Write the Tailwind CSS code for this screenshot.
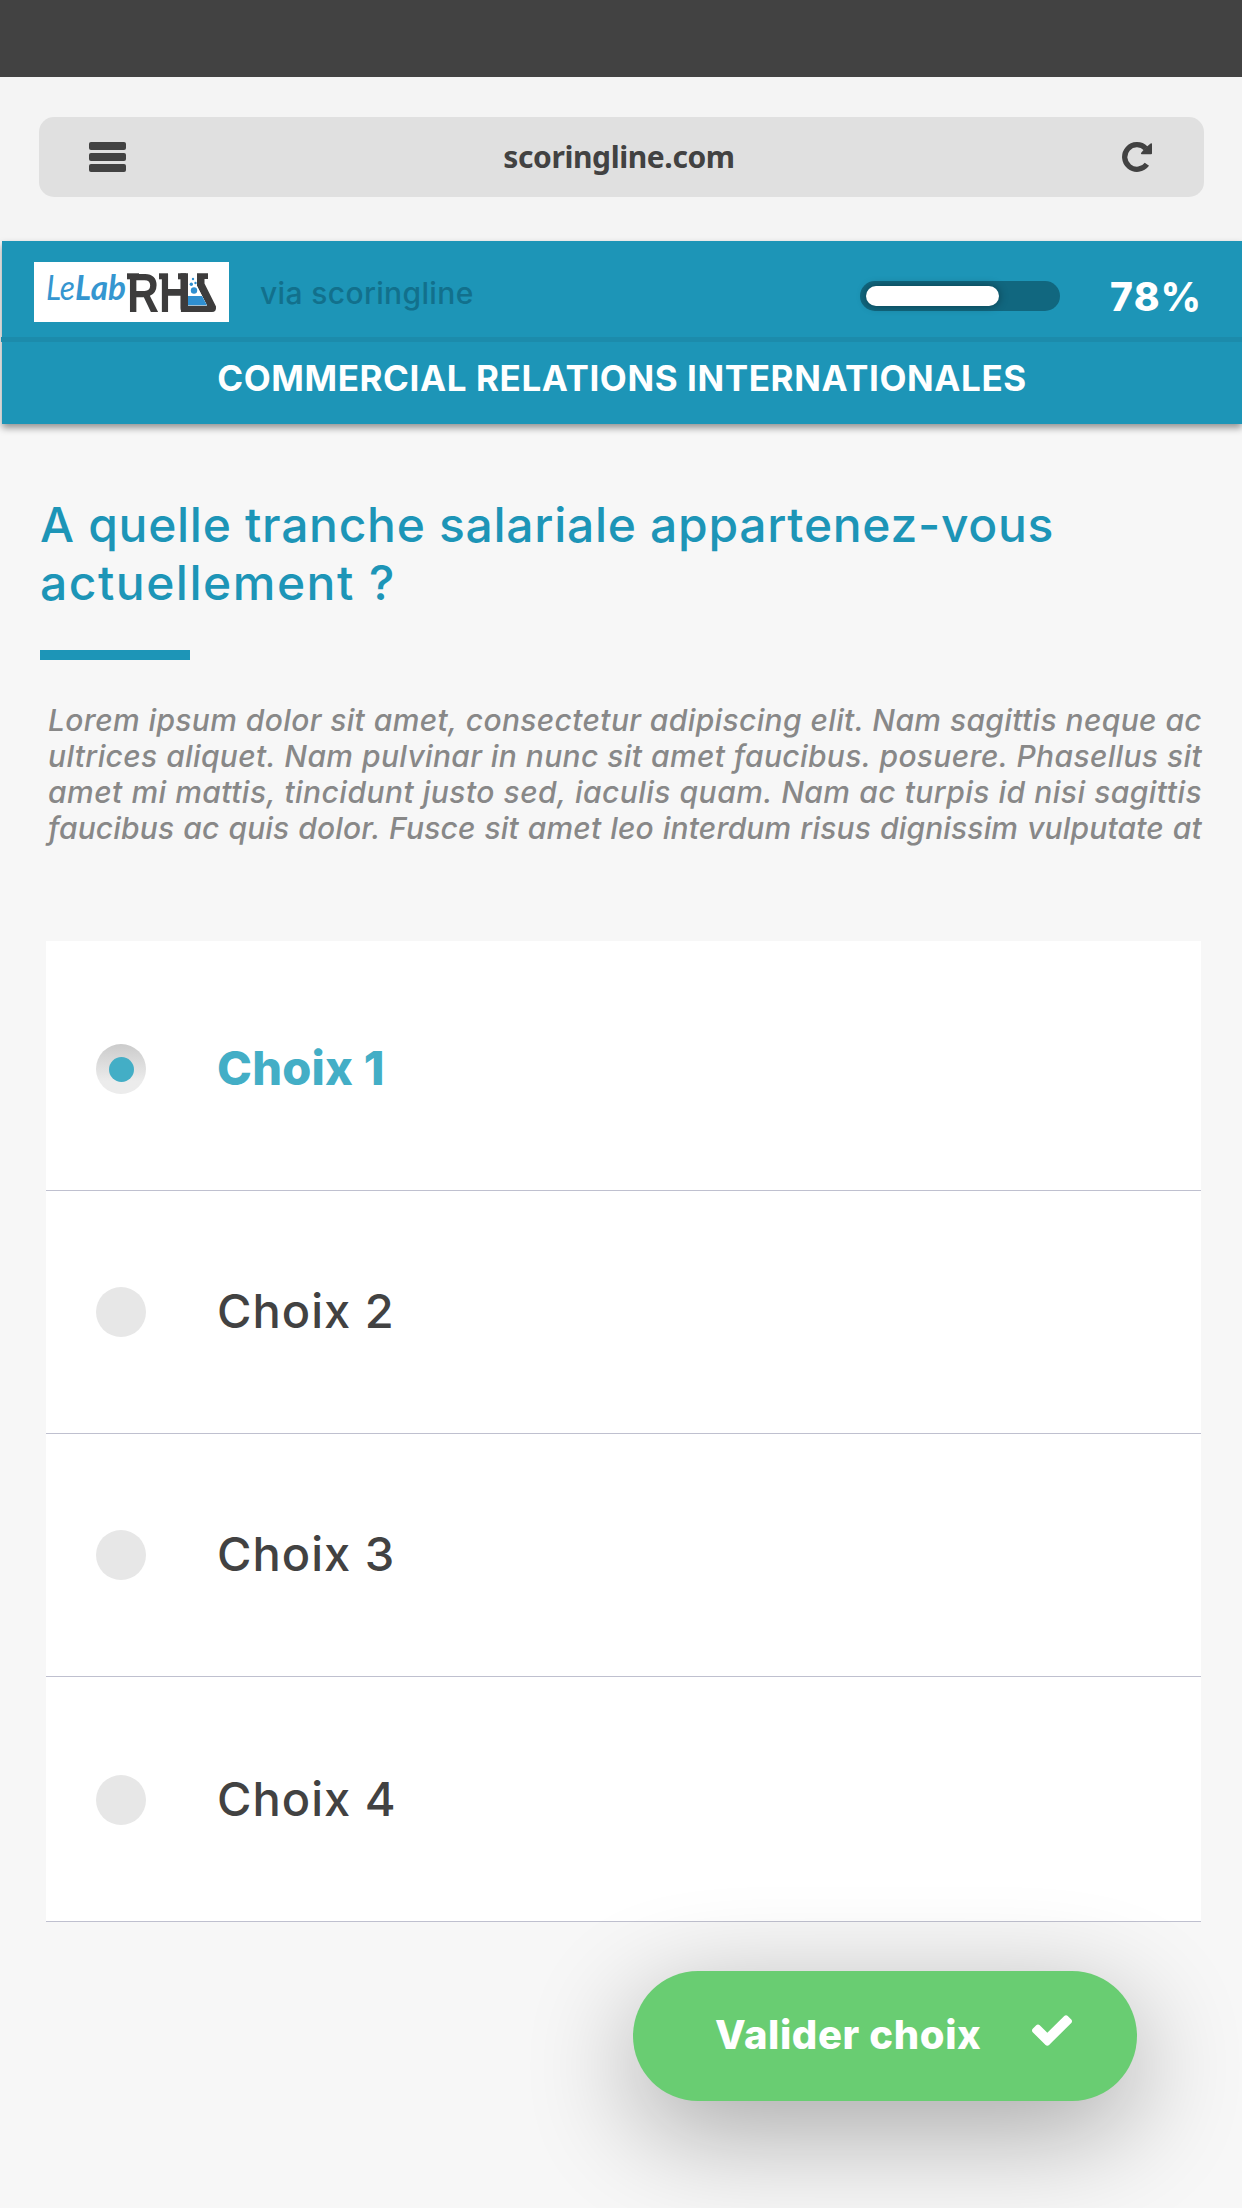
<!DOCTYPE html>
<html lang="fr">
<head>
  <meta charset="UTF-8">
  <meta name="viewport" content="width=device-width, initial-scale=1.0">
  <title>Scoringline - Commercial relations internationales</title>
  <!-- Tailwind CSS CDN -->
  <script src="https://cdn.jsdelivr.net/npm/@tailwindcss/browser@4"></script>
</head>
<body class="bg-[#f7f7f7] h-[2208px] overflow-hidden font-['Inter',sans-serif] text-[#424242]">
  <!-- Status bar -->
  <div class="h-[77px] bg-[#424242]"></div>

  <!-- Browser bar -->
  <div class="h-[164px] bg-[#f4f4f4] pt-10 pl-[39px] pr-[38px]">
    <div class="h-20 rounded-[15px] bg-[#e0e0e0] flex items-center justify-between pl-[50px] pr-[52px]">
      <div class="w-[37px] flex flex-col gap-[3px]">
        <div class="h-2 rounded-[2px] bg-[#424242]"></div>
        <div class="h-2 rounded-[2px] bg-[#424242]"></div>
        <div class="h-2 rounded-[2px] bg-[#424242]"></div>
      </div>
      <p class="pb-px pr-2.5 font-['Noto_Sans',sans-serif] font-bold text-[30px] leading-none tracking-[-0.4px]">scoringline.com</p>
      <svg class="w-[30px] h-[30px]" viewBox="0 0 30 30">
        <path d="M23.7 6.3A12.3 12.3 0 1 0 24.9 22.3" fill="none" stroke="#424242" stroke-width="5.3"/>
        <path d="M25 4.4L28.6 1.5Q30 .6 30 2V11.4Q30 12.2 29 12.2H19.6Q18.4 12 19.2 10.8L22 7.6z" fill="#424242"/>
      </svg>
    </div>
  </div>

  <!-- Header -->
  <header class="ml-0.5 h-[183px] bg-[#1d95b7] shadow-[0_4px_7px_rgba(0,0,0,0.4)]">
    <div class="h-24 flex items-center pt-1.5 pl-8 pr-[41px]">
      <svg class="w-[195px] h-[60px] bg-white overflow-visible" viewBox="0 0 195 60">
        <g fill="#3596d0" font-family="Lato, sans-serif" font-style="italic" font-size="34">
          <text x="12" y="38" textLength="29" lengthAdjust="spacingAndGlyphs">Le</text>
          <text x="41" y="38" font-weight="700" textLength="51" lengthAdjust="spacingAndGlyphs">Lab</text>
        </g>
        <g fill="#3d3c3c" font-family="Liberation Sans, sans-serif" font-weight="700" font-size="56">
          <text x="93" y="50" textLength="32" lengthAdjust="spacingAndGlyphs">R</text>
          <text x="125" y="50" textLength="31" lengthAdjust="spacingAndGlyphs">H</text>
          <rect x="93" y="11.3" width="12" height="6"/>
          <rect x="125" y="11.3" width="9" height="6"/>
          <rect x="144" y="11.3" width="8" height="6"/>
        </g>
        <!-- Flask -->
        <path d="M146.500 11.300H154V43.500H173L163 24V11.300H174V17H170.500V21.500L182 44.500Q182.500 50 178 50H150Q146.500 50 146.500 46z" fill="#3d3c3c"/>
        <path d="M154 11H163V24L173 43.500H154z" fill="#fff"/>
        <path d="M154 34H168L173 43.200H154z" fill="#2f8fd0"/>
        <g fill="#2f8fd0">
          <circle cx="160" cy="28.500" r="3.200"/>
          <circle cx="157.300" cy="22.300" r="1.700"/>
          <circle cx="161.500" cy="21" r="1.200"/>
          <circle cx="159" cy="17" r="1.200"/>
        </g>
      </svg>
      <p class="ml-[31px] pt-px font-medium text-[30px] leading-none tracking-[0.35px] text-[#12708c]">via scoringline</p>
      <div class="ml-auto mt-2 flex items-center">
        <div class="w-[200px] h-[30px] rounded-full bg-[#11677f] pl-1.5 py-[5px]">
          <div class="h-5 rounded-full bg-white shadow-[0_0_10px_rgba(0,0,0,0.4)]" style="width: 133px"></div>
        </div>
        <p class="ml-[50px] w-[91px] whitespace-nowrap font-extrabold text-[39px] leading-none tracking-[1.3px] text-white">78%</p>
      </div>
    </div>
    <div class="-ml-px h-[5px] bg-[#1c8bab]"></div>
    <h1 class="h-[82px] pb-[9px] flex items-center justify-center font-bold text-[35px] leading-none tracking-[0.6px] text-white">COMMERCIAL RELATIONS INTERNATIONALES</h1>
  </header>

  <main class="pt-[72px]">
    <h2 class="pl-10 font-medium text-[48px] leading-[58px] text-[#1d95b7]">
      <span class="block tracking-[0.7px]">A quelle tranche salariale appartenez-vous</span>
      <span class="block tracking-[1.5px]">actuellement ?</span>
    </h2>
    <div class="ml-10 mt-[38px] w-[150px] h-2.5 bg-[#1d95b7]"></div>

    <div class="mt-[42px] ml-12 mr-10 font-medium italic text-[30px] leading-9 tracking-[0.25px] text-[#888] whitespace-nowrap">
      <p class="tracking-[0.35px] [text-align-last:justify]">Lorem ipsum dolor sit amet, consectetur adipiscing elit. Nam sagittis neque ac</p>
      <p class="tracking-[0.35px] [text-align-last:justify]">ultrices aliquet. Nam pulvinar in nunc sit amet faucibus. posuere. Phasellus sit</p>
      <p class="tracking-[0.45px] [text-align-last:justify]">amet mi mattis, tincidunt justo sed, iaculis quam. Nam ac turpis id nisi sagittis</p>
      <p class="tracking-[0.15px] [text-align-last:justify]">faucibus ac quis dolor. Fusce sit amet leo interdum risus dignissim vulputate at</p>
    </div>

    <!-- Choices -->
    <ul class="mt-[95px] ml-[46px] mr-[41px] bg-white text-[47px] leading-none font-medium tracking-[1px]">
      <li class="h-[250px] pt-[7px] pl-[50px] flex items-center border-b border-[#bfc0cf]">
        <span class="w-[50px] h-[50px] rounded-full bg-[#e9e9e9] bg-linear-to-b from-[#cbcbcb] to-[#ececec] to-75% flex items-center justify-center">
          <span class="w-[25px] h-[25px] rounded-full bg-[#43aec6]"></span>
        </span>
        <span class="ml-[71px] pb-[3px] font-extrabold tracking-[0.2px] text-[#43aec6]">Choix 1</span>
      </li>
      <li class="h-[243px] pl-[50px] flex items-center border-b border-[#bfc0cf]">
        <span class="w-[50px] h-[50px] rounded-full bg-[#e7e7e7]"></span>
        <span class="ml-[71px] pb-[3px]">Choix 2</span>
      </li>
      <li class="h-[243px] pl-[50px] flex items-center border-b border-[#bfc0cf]">
        <span class="w-[50px] h-[50px] rounded-full bg-[#e7e7e7]"></span>
        <span class="ml-[71px] pb-[3px]">Choix 3</span>
      </li>
      <li class="h-[245px] pt-px pl-[50px] flex items-center border-b border-[#bfc0cf]">
        <span class="w-[50px] h-[50px] rounded-full bg-[#e7e7e7]"></span>
        <span class="ml-[71px] pb-[3px]">Choix 4</span>
      </li>
    </ul>

    <button class="mt-[49px] ml-[633px] w-[504px] h-[130px] rounded-full bg-[#69cd72] pl-[82px] pr-[65px] flex items-center justify-between text-white shadow-[0_30px_110px_rgba(0,0,0,0.33)]">
      <span class="pb-[3px] font-extrabold text-[40px] leading-none tracking-[0.6px]">Valider choix</span>
      <svg class="w-10 h-[31px] mb-3" viewBox="121 334 1550 1188" fill="#fff">
        <path d="M1671 566q0 40-28 68l-724 724-136 136q-28 28-68 28t-68-28l-136-136-362-362q-28-28-28-68t28-68l136-136q28-28 68-28t68 28l294 295 656-657q28-28 68-28t68 28l136 136q28 28 28 68z"/>
      </svg>
    </button>
  </main>
</body>
</html>
